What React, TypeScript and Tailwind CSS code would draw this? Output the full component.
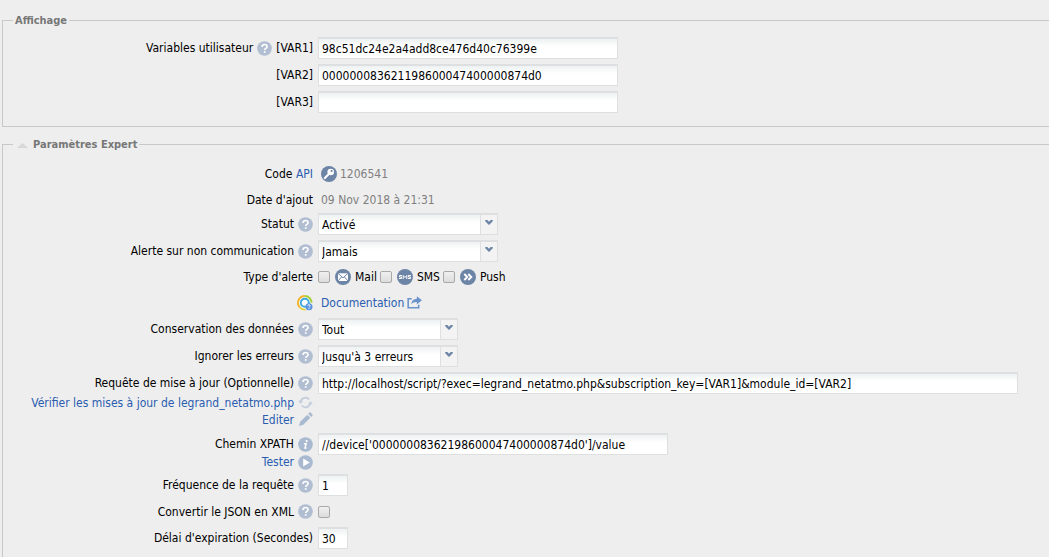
import React, { useEffect, useRef, useState } from "react";
import cc from "clsx";

type IconProps = { className?: string };

function HelpIcon() {
  return (
    <svg viewBox="0 0 16 16" className="size-[15px] shrink-0" aria-hidden="true">
      <circle cx="8" cy="8" r="7.8" fill="#b1bed2" />
      <path
        d="M5.4 6.3c0-1.600 1.100-2.600 2.700-2.600s2.600.9 2.600 2.300c0 1.900-2.500 1.900-2.500 3.600"
        fill="none"
        stroke="#fff"
        strokeWidth="1.700"
      />
      <rect x="7.300" y="10.800" width="1.800" height="1.800" fill="#fff" />
    </svg>
  );
}

function InfoIcon() {
  return (
    <svg viewBox="0 0 16 16" className="size-[15px] shrink-0" aria-hidden="true">
      <circle cx="8" cy="8" r="7.800" fill="#a9b9d0" />
      <circle cx="9.200" cy="4.300" r="1.200" fill="#fff" />
      <path
        d="M6.300 7.200h2.400l-1.300 4.600h1.800"
        fill="none"
        stroke="#fff"
        strokeWidth="1.500"
      />
    </svg>
  );
}

function PlayIcon() {
  return (
    <svg viewBox="0 0 16 16" className="size-[15px] shrink-0" aria-hidden="true">
      <circle cx="8" cy="8" r="7.800" fill="#a9b9d0" />
      <path d="M5.500 3.800v8.400l7-4.200z" fill="#fff" />
    </svg>
  );
}

function RefreshIcon() {
  return (
    <svg viewBox="0 0 16 16" className="size-[15px] shrink-0" aria-hidden="true">
      <g fill="none" stroke="#c3cddb" strokeWidth="1.800">
        <path d="M2.800 7.500A5.200 5.200 0 0 1 12 4.800" />
        <path d="M13.200 8.500A5.200 5.200 0 0 1 4 11.200" />
      </g>
      <path d="M.3 6.200h5L2.800 9.700zM10.700 9.800h5l-2.500-3.500z" fill="#c3cddb" />
    </svg>
  );
}

function PencilIcon() {
  return (
    <svg viewBox="0 0 16 16" className="size-[15px] shrink-0" aria-hidden="true">
      <path
        d="M1 15l1.300-4.600 7.600-7.600 3.300 3.300-7.600 7.600zM10.800 1.900l1.200-1.200c.5-.5 1.200-.5 1.700 0l1.600 1.600c.5.5.5 1.200 0 1.700l-1.200 1.200z"
        fill="#a9b9d0"
      />
    </svg>
  );
}

function KeyIcon() {
  return (
    <svg viewBox="0 0 16 16" className="size-4 shrink-0" aria-hidden="true">
      <circle cx="8" cy="8" r="8" fill="#6c84a6" />
      <circle cx="9.700" cy="6" r="3.300" fill="#fff" />
      <circle cx="10.600" cy="5" r="1.100" fill="#6c84a6" />
      <path d="M7.800 8l-4.600 4.800" stroke="#fff" strokeWidth="2" />
    </svg>
  );
}

function MailIcon() {
  return (
    <svg viewBox="0 0 16 16" className="size-4 shrink-0" aria-hidden="true">
      <circle cx="8" cy="8" r="8" fill="#6c84a6" />
      <rect x="3" y="4.300" width="10" height="7.700" fill="#fff" />
      <path
        d="M3 4.300l5 4.500 5-4.500M3 12l3.500-4M13 12L9.500 8"
        fill="none"
        stroke="#6c84a6"
        strokeWidth="1"
      />
    </svg>
  );
}

function SmsIcon() {
  return (
    <svg viewBox="0 0 16 16" className="size-4 shrink-0" aria-hidden="true">
      <circle cx="8" cy="8" r="8" fill="#6c84a6" />
      <g fill="none" stroke="#fff" strokeWidth="1">
        <path d="M4.900 6.500H2.500V8h2v1.500H2" />
        <path d="M6.200 10V6.500L8 8.500l1.800-2V10" />
        <path d="M13.900 6.500h-2.400V8h2v1.500H11" />
      </g>
    </svg>
  );
}

function PushIcon() {
  return (
    <svg viewBox="0 0 16 16" className="size-4 shrink-0" aria-hidden="true">
      <circle cx="8" cy="8" r="8" fill="#6c84a6" />
      <path
        d="M4.300 5l3 3-3 3M8.300 5l3 3-3 3"
        fill="none"
        stroke="#fff"
        strokeWidth="1.900"
      />
    </svg>
  );
}

function DocIcon() {
  return (
    <svg viewBox="0 0 16 16" className="size-4 shrink-0" aria-hidden="true">
      <circle cx="7.800" cy="7.800" r="5.500" fill="#fff" />
      <g fill="none" strokeWidth="1.900">
        <path d="M7.800 1A6.800 6.800 0 0 0 3 12.600" stroke="#f3b52a" />
        <path d="M7.800 1a6.800 6.800 0 0 1 6.800 6.800" stroke="#a6cf3a" />
        <path d="M3 12.600a6.800 6.800 0 0 0 5.500 2" stroke="#e8d23a" />
        <circle cx="7.800" cy="7.800" r="4" stroke="#3fa9dc" />
      </g>
      <circle cx="12" cy="11.800" r="3.500" fill="#5b93e0" />
      <path
        d="M10.800 10.800c0-1.600 2.400-1.400 2.300 0 0 .9-1.100.8-1.100 1.800M12 13.100v1"
        fill="none"
        stroke="#fff"
        strokeWidth=".9"
      />
    </svg>
  );
}

function ShareIcon() {
  return (
    <svg viewBox="0 0 16 14" className="h-[13px] w-[15px] shrink-0" aria-hidden="true">
      <path
        d="M5 3H1.200v9.700h11.300V9.500"
        fill="none"
        stroke="#6b93cb"
        strokeWidth="1.700"
      />
      <path
        d="M4.500 9C4.800 5.200 7 3.200 10.500 3V.3L16 4.700l-5.500 4.400V6.400C8 6.300 6 7 4.500 9z"
        fill="#6b93cb"
      />
    </svg>
  );
}

function Chevron({ className }: IconProps) {
  return (
    <svg viewBox="0 0 9 6" className={className} aria-hidden="true">
      <path d="M0 0h2.500l2 2 2-2H9v1.500L4.500 6 0 1.500z" fill="#6c84a6" />
    </svg>
  );
}

const fieldClass =
  "block h-[22px] max-w-full border border-t-2 border-[#dddfe0] bg-white bg-linear-to-b from-[#eef2f2] to-white to-40% px-[3px] text-black outline-none";

type TextFieldProps = {
  id: string;
  value: string;
  width: string;
  caret?: number;
};

function TextField({ id, value, width, caret }: TextFieldProps) {
  const ref = useRef<HTMLInputElement>(null);

  useEffect(() => {
    if (caret === undefined) return;
    ref.current?.focus();
    ref.current?.setSelectionRange(caret, caret);
  }, [caret]);

  return (
    <input
      ref={ref}
      id={id}
      type="text"
      defaultValue={value}
      className={cc(fieldClass, width)}
    />
  );
}

type SelectFieldProps = { id: string; options: string[]; width: string };

function SelectField({ id, options, width }: SelectFieldProps) {
  return (
    <div className={cc("relative", width)}>
      <select id={id} className={cc(fieldClass, "w-full appearance-none pr-5")}>
        {options.map((o) => (
          <option key={o}>{o}</option>
        ))}
      </select>
      <span className="pointer-events-none absolute top-0.5 right-px bottom-px flex w-[17px] justify-center border-l border-[#dddfe0] bg-[#f3f3f3] pt-[5px]">
        <Chevron className="h-[5px] w-2" />
      </span>
    </div>
  );
}

function CheckBox({ id }: { id: string }) {
  return (
    <input
      id={id}
      type="checkbox"
      className="size-3 shrink-0 appearance-none rounded-xs border border-[#a9a9a9] bg-linear-to-b from-[#f0f0f0] to-[#dcdcdc] checked:bg-[#6c84a6]"
    />
  );
}

type RowProps = {
  label: React.ReactNode;
  htmlFor?: string;
  icon?: React.ReactNode;
  height?: string;
  below?: React.ReactNode;
  children?: React.ReactNode;
};

function Row({ label, htmlFor, icon, height, below, children }: RowProps) {
  const line = cc("flex items-center", height || "h-[22px]");
  return (
    <div className="flex gap-[5px]">
      <div className="w-[310px] shrink-0">
        <div className={cc(line, "justify-end gap-1")}>
          {htmlFor ? <label htmlFor={htmlFor}>{label}</label> : label}
          {icon}
        </div>
        {below}
      </div>
      <div className={cc(line, "min-w-0 grow")}>{children}</div>
    </div>
  );
}

type ActionProps = { text: string; icon: React.ReactNode; height: string };

function Action({ text, icon, height }: ActionProps) {
  return (
    <div className={cc("flex items-center justify-end gap-1", height)}>
      <a href="#" className="text-[#2a5db0]">
        {text}
      </a>
      {icon}
    </div>
  );
}

const variables = [
  { name: "VAR1", value: "98c51dc24e2a4add8ce476d40c76399e" },
  { name: "VAR2", value: "000000083621198600047400000874d0" },
  { name: "VAR3", value: "" },
];

const alerts = [
  { id: "mail", label: "Mail", icon: <MailIcon /> },
  { id: "sms", label: "SMS", icon: <SmsIcon /> },
  { id: "push", label: "Push", icon: <PushIcon /> },
];

export default function App() {
  const [open, setOpen] = useState(true);

  return (
    <div className="min-h-screen overflow-hidden bg-[#eee] pt-3 pl-0.5 font-['DejaVu_Sans_Condensed','DejaVu_Sans',sans-serif] text-xs leading-4 text-black">
      <fieldset className="border border-r-0 border-[#c8c8c8] pb-[13px]">
        <legend className="ml-2.5 h-[17px] px-0.5 text-[11px] leading-[18px] font-bold text-[#777]">
          Affichage
        </legend>
        <div className="flex flex-col gap-[5px] pt-2">
          {variables.map(({ name, value }, i) => (
            <Row
              key={name}
              htmlFor={name}
              label={
                <span className="flex items-center gap-1">
                  {i === 0 && (
                    <>
                      Variables utilisateur <HelpIcon />
                    </>
                  )}
                  <span>[{name}]</span>
                </span>
              }
            >
              <TextField id={name} value={value} width="w-[300px]" />
            </Row>
          ))}
        </div>
      </fieldset>

      <fieldset className="mt-[9px] border border-r-0 border-b-0 border-[#c8c8c8] pb-2">
        <legend className="ml-2.5 h-[17px] pr-0.5 pl-1 text-[11px] leading-[18px] font-bold text-[#777]">
          <button
            type="button"
            className="flex items-center gap-[5px]"
            aria-expanded={open}
            onClick={() => setOpen(!open)}
          >
            <svg viewBox="0 0 11 5" className="h-[5px] w-[11px]" aria-hidden="true">
              <path d="M0 5L5.500 0 11 5z" fill="#d8d8d8" />
            </svg>
            Paramètres Expert
          </button>
        </legend>
        {open && (
          <div className="flex flex-col gap-[5px] pt-2">
            <div>
              <Row
                height="h-[26px]"
                label={
                  <span>
                    Code{" "}
                    <a href="#" className="text-[#2a5db0]">
                      API
                    </a>
                  </span>
                }
              >
                <span className="flex items-center gap-[3px] pl-[3px] text-[#808080]">
                  <KeyIcon />
                  1206541
                </span>
              </Row>
              <Row height="h-[26px]" label="Date d'ajout">
                <span className="pl-[3px] text-[#808080]">
                  09 Nov 2018 à 21:31
                </span>
              </Row>
              <Row label="Statut" htmlFor="statut" icon={<HelpIcon />}>
                <SelectField
                  id="statut"
                  options={["Activé", "Désactivé"]}
                  width="w-[180px]"
                />
              </Row>
            </div>
            <Row
              label="Alerte sur non communication"
              htmlFor="alerte"
              icon={<HelpIcon />}
            >
              <SelectField id="alerte" options={["Jamais"]} width="w-[180px]" />
            </Row>
            <Row height="h-5" label="Type d'alerte">
              <div className="flex items-center gap-[3px]">
                {alerts.map(({ id, label, icon }) => (
                  <div key={id} className="flex items-center gap-[5px]">
                    <CheckBox id={id} />
                    <label htmlFor={id} className="flex items-center gap-1">
                      {icon}
                      {label}
                    </label>
                  </div>
                ))}
              </div>
            </Row>
            <Row height="h-[21px]" label={<DocIcon />}>
              <a
                href="#"
                className="flex items-center gap-[3px] pl-[3px] text-[#2a5db0]"
              >
                Documentation
                <ShareIcon />
              </a>
            </Row>
            <Row
              label="Conservation des données"
              htmlFor="conservation"
              icon={<HelpIcon />}
            >
              <SelectField
                id="conservation"
                options={["Tout"]}
                width="w-[140px]"
              />
            </Row>
            <Row
              label="Ignorer les erreurs"
              htmlFor="erreurs"
              icon={<HelpIcon />}
            >
              <SelectField
                id="erreurs"
                options={["Jusqu'à 3 erreurs"]}
                width="w-[140px]"
              />
            </Row>
            <Row
              label="Requête de mise à jour (Optionnelle)"
              htmlFor="requete"
              icon={<HelpIcon />}
              below={
                <>
                  <Action
                    text="Vérifier les mises à jour de legrand_netatmo.php"
                    icon={<RefreshIcon />}
                    height="h-[17px]"
                  />
                  <Action
                    text="Editer"
                    icon={<PencilIcon />}
                    height="h-[17px]"
                  />
                </>
              }
            >
              <TextField
                id="requete"
                value="http://localhost/script/?exec=legrand_netatmo.php&subscription_key=[VAR1]&module_id=[VAR2]"
                width="w-[700px]"
              />
            </Row>
            <Row
              label="Chemin XPATH"
              htmlFor="xpath"
              icon={<InfoIcon />}
              below={
                <Action text="Tester" icon={<PlayIcon />} height="h-3.5" />
              }
            >
              <TextField
                id="xpath"
                value="//device['00000008362198600047400000874d0']/value"
                width="w-[350px]"
                caret={22}
              />
            </Row>
            <Row
              label="Fréquence de la requête"
              htmlFor="frequence"
              icon={<HelpIcon />}
            >
              <TextField id="frequence" value="1" width="w-[30px]" />
            </Row>
            <Row
              height="h-[21px]"
              label="Convertir le JSON en XML"
              htmlFor="json"
              icon={<HelpIcon />}
            >
              <CheckBox id="json" />
            </Row>
            <Row label="Délai d'expiration (Secondes)" htmlFor="delai">
              <TextField id="delai" value="30" width="w-[30px]" />
            </Row>
          </div>
        )}
      </fieldset>
    </div>
  );
}
